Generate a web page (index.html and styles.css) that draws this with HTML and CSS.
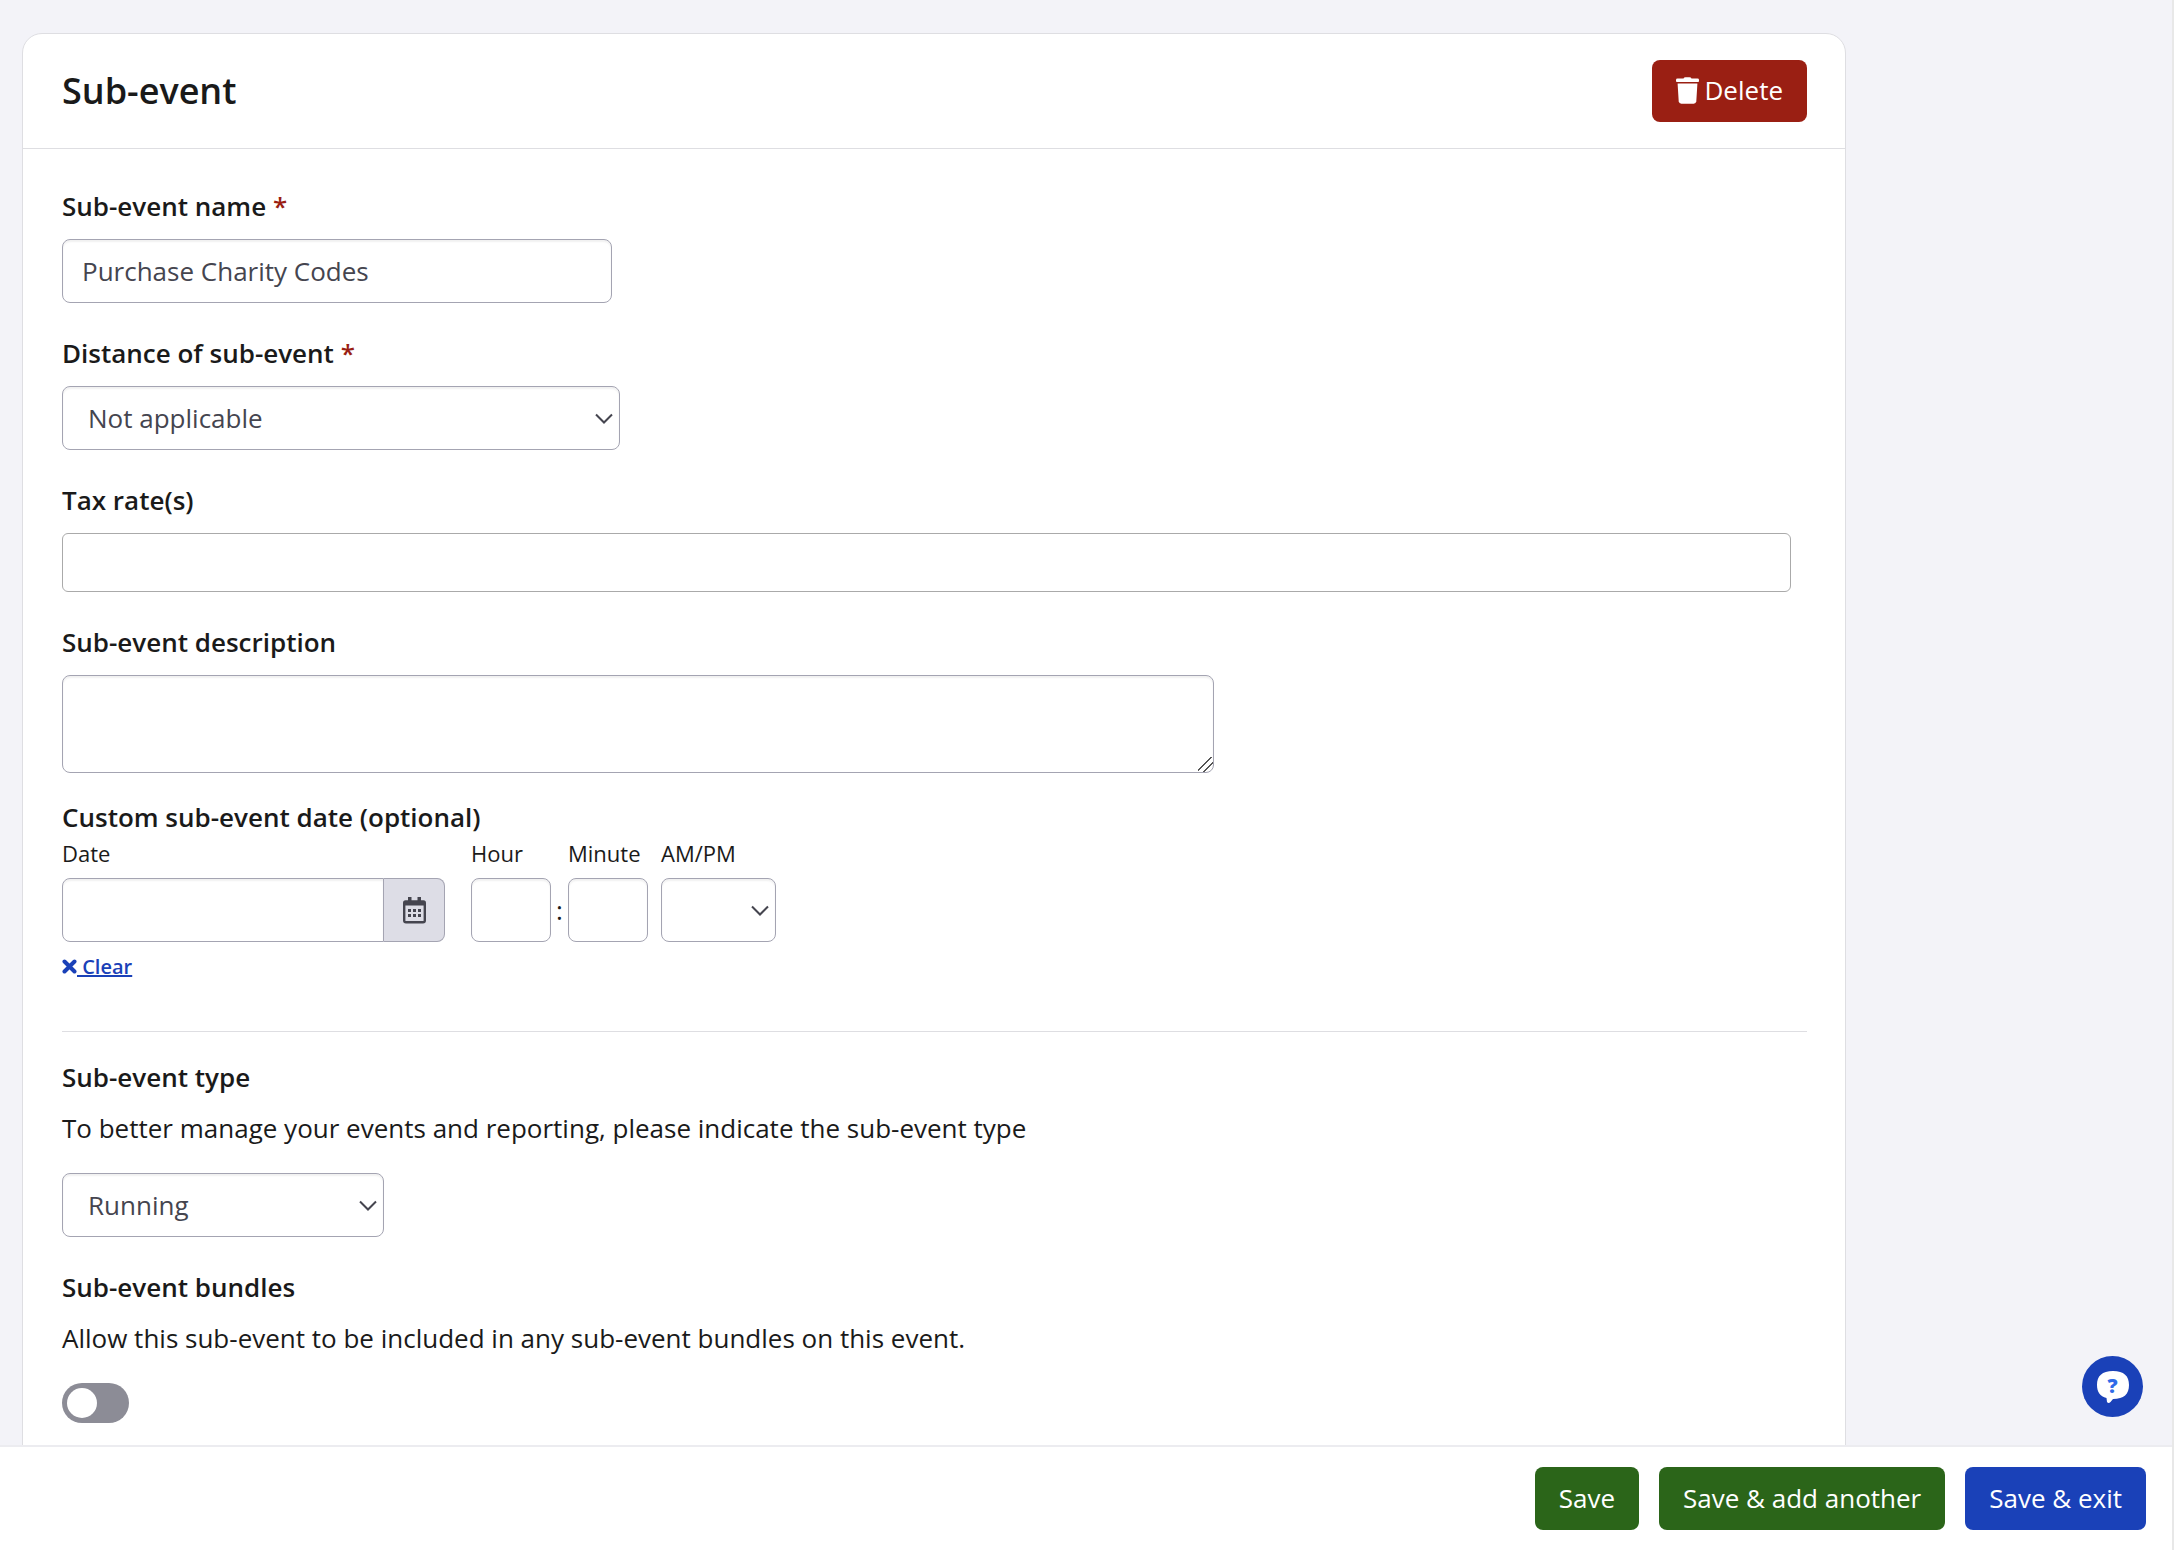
FILE: index.html
```html
<!DOCTYPE html>
<html lang="en">
<head>
    <meta charset="UTF-8">
    <meta name="viewport" content="width=device-width, initial-scale=1.0">
    <title>Sub-event</title>
    <link rel="stylesheet" href="styles.css">
</head>
<body>

    <div class="page">
        <main class="content">
            <form id="sub-event-form" class="card">
                <header class="card-header">
                    <h1>Sub-event</h1>
                    <button type="button" class="btn btn-delete">
                        <svg class="icon-trash" viewBox="0 0 23 27" aria-hidden="true">
                            <path d="M7.500 1.600 Q8 .3 9.500 .3 H13.500 Q15 .3 15.500 1.600 H21.500 Q23 1.600 23 3 V4.200 Q23 5 22 5 H1 Q0 5 0 4.200 V3 Q0 1.600 1.500 1.600 Z"/>
                            <path d="M1.600 6.500 H21.400 L20.300 24.300 Q20 26.700 17.700 26.700 H5.300 Q3 26.700 2.700 24.300 Z"/>
                        </svg>
                        Delete
                    </button>
                </header>

                <div class="card-body">
                    <div class="field">
                        <label class="label" for="name">Sub-event name <span class="required">*</span></label>
                        <input id="name" class="control name-input" type="text" value="Purchase Charity Codes" required>
                    </div>

                    <div class="field">
                        <label class="label" for="distance">Distance of sub-event <span class="required">*</span></label>
                        <div class="select distance-select">
                            <select id="distance" class="control">
                                <option>Not applicable</option>
                            </select>
                            <svg class="chevron" viewBox="0 0 18 11" aria-hidden="true"><path d="M1 1.500 L9 9.500 L17 1.500"/></svg>
                        </div>
                    </div>

                    <div class="field">
                        <label class="label" for="tax">Tax rate(s)</label>
                        <input id="tax" class="tax-input" type="text">
                    </div>

                    <div class="field field-description">
                        <label class="label" for="description">Sub-event description</label>
                        <textarea id="description" class="control description"></textarea>
                    </div>

                    <fieldset class="date-fields">
                        <legend class="label">Custom sub-event date (optional)</legend>
                        <div class="date-row">
                            <div class="part part-date">
                                <label for="date">Date</label>
                                <div class="input-group">
                                    <input id="date" class="control" type="text">
                                    <button type="button" class="addon" aria-label="Choose date">
                                        <svg class="icon-calendar" viewBox="0 0 23 27" aria-hidden="true">
                                            <path class="frame" d="M2.500 4.500 H20.500 Q21.800 4.500 21.800 6 V23.500 Q21.800 25.300 20 25.300 H3 Q1.200 25.300 1.200 23.500 V6 Q1.200 4.500 2.500 4.500 Z"/>
                                            <path d="M1 4 H22 V8.500 H1 Z M5 0 H8.500 V5 H5 Z M14.500 0 H18 V5 H14.500 Z"/>
                                            <path d="M5 12 H8 V15 H5 Z M10 12 H13 V15 H10 Z M15 12 H18 V15 H15 Z M5 17 H8 V20 H5 Z M10 17 H13 V20 H10 Z M15 17 H18 V20 H15 Z"/>
                                        </svg>
                                    </button>
                                </div>
                            </div>
                            <div class="part part-time">
                                <label for="hour">Hour</label>
                                <input id="hour" class="control" type="text">
                            </div>
                            <span class="colon">:</span>
                            <div class="part part-time">
                                <label for="minute">Minute</label>
                                <input id="minute" class="control" type="text">
                            </div>
                            <div class="part part-ampm">
                                <label for="ampm">AM/PM</label>
                                <div class="select">
                                    <select id="ampm" class="control">
                                        <option></option>
                                        <option>AM</option>
                                        <option>PM</option>
                                    </select>
                                    <svg class="chevron" viewBox="0 0 18 11" aria-hidden="true"><path d="M1 1.500 L9 9.500 L17 1.500"/></svg>
                                </div>
                            </div>
                        </div>
                        <a class="clear" href="#date"><svg class="icon-times" viewBox="0 0 15 15" aria-hidden="true"><path d="M2.500 2.500 L12.500 12.500 M12.500 2.500 L2.500 12.500"/></svg> Clear</a>
                    </fieldset>

                    <hr>

                    <div class="field">
                        <label class="label" for="type">Sub-event type</label>
                        <p>To better manage your events and reporting, please indicate the sub-event type</p>
                        <div class="select type-select">
                            <select id="type" class="control">
                                <option>Running</option>
                            </select>
                            <svg class="chevron" viewBox="0 0 18 11" aria-hidden="true"><path d="M1 1.500 L9 9.500 L17 1.500"/></svg>
                        </div>
                    </div>

                    <div class="field">
                        <label class="label" for="bundles">Sub-event bundles</label>
                        <p>Allow this sub-event to be included in any sub-event bundles on this event.</p>
                        <input id="bundles" class="toggle" type="checkbox" role="switch">
                    </div>
                </div>
            </form>
        </main>

        <footer class="action-bar">
            <button type="submit" form="sub-event-form" class="btn btn-save">Save</button>
            <button type="submit" form="sub-event-form" class="btn btn-save">Save &amp; add another</button>
            <button type="submit" form="sub-event-form" class="btn btn-exit">Save &amp; exit</button>
        </footer>

        <button type="button" class="help" aria-label="Help">
            <svg viewBox="0 0 32 32" aria-hidden="true">
                <path d="M16 0 C27 0 32 5 32 14 C32 23 27 28 16 28 L13.500 31 Q11.500 33 10 31 L9.500 27 C3 25.500 0 21 0 14 C0 5 5 0 16 0 Z"/>
            </svg>
            <span class="help-mark">?</span>
        </button>
    </div>

</body>
</html>
```

FILE: styles.css
```css
* {
    box-sizing: border-box;
}

body {
    margin: 0;
    font-family: "Open Sans", sans-serif;
    font-size: 26px;
    line-height: 36px;
    color: #1a1a1a;
    background-color: #fff;
}

.page {
    display: flex;
    flex-direction: column;
    height: 100vh;
    margin-right: 4px;
    border-right: 2px solid #e8e8e8;
}

.content {
    flex: 1;
    min-height: 0;
    overflow: hidden;
    padding: 33px 326px 0 22px;
    background-color: #f3f3f8;
}

.card {
    border: 1px solid #dedee2;
    border-radius: 20px;
    background-color: #fff;
}

.card-header {
    display: flex;
    justify-content: space-between;
    align-items: center;
    padding: 26px 38px 26px 39px;
    border-bottom: 1px solid #dedee2;
}

.card-header h1 {
    margin: 0;
    font-size: 36px;
    font-weight: 600;
}

.card-body {
    padding: 39px 38px 60px 39px;
}

/* Buttons */
.btn {
    display: flex;
    align-items: center;
    gap: 6px;
    height: 63px;
    padding: 0 24px 2px;
    border: none;
    border-radius: 8px;
    font: inherit;
    color: #fff;
    cursor: pointer;
}

.btn-delete {
    height: 62px;
    background-color: #9a1f13;
}

.btn-save {
    background-color: #2b6519;
}

.btn-exit {
    background-color: #1a41b8;
}

.icon-trash {
    width: 23px;
    height: 27px;
    fill: #fff;
}

/* Fields */
.field {
    margin-bottom: 32px;
}

.field-description {
    margin-bottom: 26px;
}

.label {
    display: block;
    margin-bottom: 15px;
    padding: 0;
    font-weight: 600;
}

.required {
    color: #9a1f13;
}

.control {
    display: block;
    width: 100%;
    height: 64px;
    padding: 0 19px;
    border: 1px solid #a4a4b2;
    border-radius: 8px;
    background-color: #fff;
    box-shadow: inset 0 2px 2px rgba(0, 0, 0, 0.06);
    font: inherit;
    color: #45454f;
}

.name-input {
    width: 550px;
}

.select {
    position: relative;
}

.select .control {
    appearance: none;
    padding: 0 25px;
}

.distance-select {
    width: 558px;
}

.type-select {
    width: 322px;
}

.chevron {
    position: absolute;
    top: 27px;
    right: 7px;
    width: 18px;
    height: 11px;
    fill: none;
    stroke: #45454f;
    stroke-width: 2;
    pointer-events: none;
}

.tax-input {
    display: block;
    width: calc(100% - 16px);
    height: 59px;
    border: 1px solid #aaa;
    border-radius: 6px;
    font: inherit;
}

.control.description {
    width: 1152px;
    height: 98px;
}

.description::-webkit-resizer {
    background: linear-gradient(135deg, transparent 41%, #555 41% 47%, transparent 47% 65%, #555 65% 71%, transparent 71%);
}

/* Date and time */
.date-fields {
    margin: 0;
    padding: 0;
    border: none;
}

.date-fields .label {
    margin-bottom: 0;
}

.date-row {
    display: flex;
    align-items: flex-end;
}

.part label {
    display: block;
    margin-bottom: 7px;
    font-size: 22px;
}

.part-date {
    width: 383px;
    margin-right: 26px;
}

.input-group {
    display: flex;
}

.input-group .control {
    flex: 1;
    border-radius: 8px 0 0 8px;
}

.addon {
    width: 61px;
    border: 1px solid #a4a4b2;
    border-left: none;
    border-radius: 0 8px 8px 0;
    background-color: #dddde6;
}

.icon-calendar {
    display: block;
    width: 23px;
    height: 27px;
    margin: 0 auto;
    fill: #45454f;
}

.icon-calendar .frame {
    fill: none;
    stroke: #45454f;
    stroke-width: 2.4;
}

.part-time {
    width: 80px;
}

.colon {
    width: 17px;
    line-height: 64px;
    text-align: center;
}

.part-ampm {
    width: 115px;
    margin-left: 13px;
}

.clear {
    display: inline-block;
    margin-top: 7px;
    font-size: 20px;
    font-weight: 600;
    color: #1a41b8;
}

.icon-times {
    width: 15px;
    height: 15px;
    fill: none;
    stroke: #1a41b8;
    stroke-width: 4;
    stroke-linecap: round;
}

hr {
    height: 1px;
    margin: 46px 0 27px;
    border: none;
    background-color: #dedee2;
}

.field p {
    margin: 0 0 27px;
}

.toggle {
    display: block;
    appearance: none;
    width: 67px;
    height: 40px;
    margin: 0;
    padding: 5px;
    border-radius: 20px;
    background-color: #8c8c96;
    cursor: pointer;
}

.toggle::before {
    content: "";
    display: block;
    width: 30px;
    height: 30px;
    border-radius: 50%;
    background-color: #fff;
}

.toggle:checked {
    background-color: #1a41b8;
}

.toggle:checked::before {
    margin-left: auto;
}

/* Bottom bar */
.action-bar {
    display: flex;
    justify-content: flex-end;
    gap: 20px;
    padding: 20px 26px;
    border-top: 2px solid #ececf0;
    background-color: #fff;
}

.help {
    position: fixed;
    right: 35px;
    bottom: 133px;
    display: grid;
    place-items: center;
    width: 61px;
    height: 61px;
    padding: 0;
    border: none;
    border-radius: 50%;
    background-color: #1a41b8;
    cursor: pointer;
}

.help svg,
.help-mark {
    grid-area: 1 / 1;
}

.help svg {
    width: 32px;
    height: 32px;
    fill: #fff;
}

.help-mark {
    padding-bottom: 2px;
    font: 800 20px/24px "Open Sans", sans-serif;
    color: #2f6be8;
}
```
